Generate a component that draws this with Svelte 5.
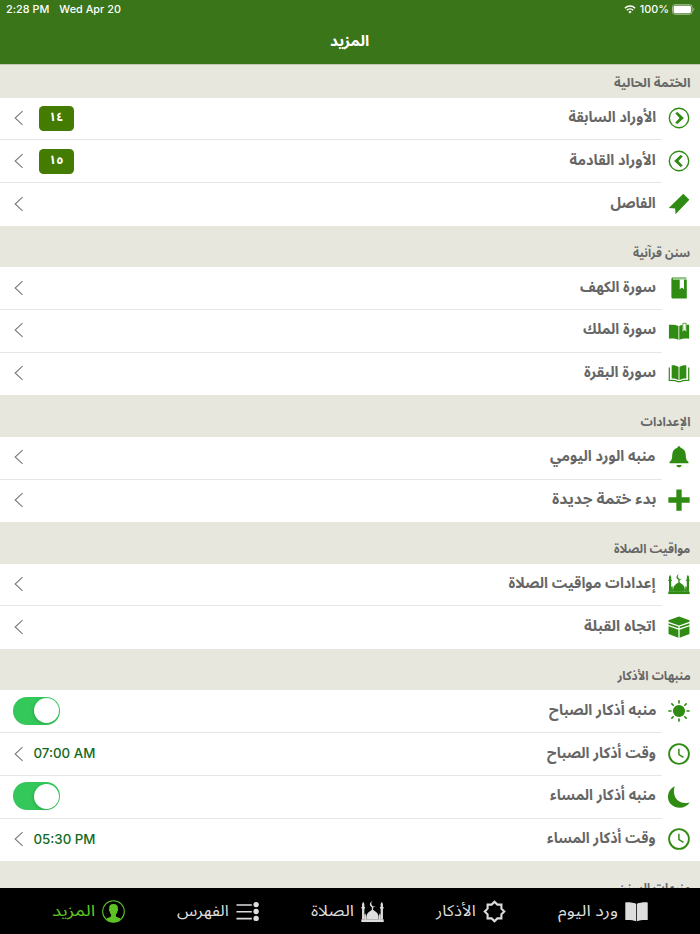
<script>
  const sections = [
    { title: 'الختمة الحالية', w: 76, first: true, rows: [
      { label: 'الأوراد السابقة', w: 87.5, icon: 'prev', badge: '١٤' },
      { label: 'الأوراد القادمة', w: 86.5, icon: 'next', badge: '١٥' },
      { label: 'الفاصل', w: 45.5, icon: 'bookmark' }
    ] },
    { title: 'سنن قرآنية', w: 57, rows: [
      { label: 'سورة الكهف', w: 76, icon: 'book' },
      { label: 'سورة الملك', w: 73, icon: 'bookOpen' },
      { label: 'سورة البقرة', w: 72, icon: 'bookWide' }
    ] },
    { title: 'الإعدادات', w: 50.5, rows: [
      { label: 'منبه الورد اليومي', w: 106, icon: 'bell' },
      { label: 'بدء ختمة جديدة', w: 104, icon: 'plus' }
    ] },
    { title: 'مواقيت الصلاة', w: 76, rows: [
      { label: 'إعدادات مواقيت الصلاة', w: 147.5, icon: 'mosque' },
      { label: 'اتجاه القبلة', w: 72, icon: 'kaaba' }
    ] },
    { title: 'منبهات الأذكار', w: 73.5, rows: [
      { label: 'منبه أذكار الصباح', w: 107, icon: 'sun', toggle: true },
      { label: 'وقت أذكار الصباح', w: 109, icon: 'clock', time: '07:00 AM' },
      { label: 'منبه أذكار المساء', w: 106, icon: 'moon', toggle: true },
      { label: 'وقت أذكار المساء', w: 109, icon: 'clock', time: '05:30 PM' }
    ] },
    { title: 'منبهات السنن', w: 73, rows: [] }
  ];

  const tabs = [
    { label: 'ورد اليوم', w: 60, icon: 'read' },
    { label: 'الأذكار', w: 40, icon: 'star' },
    { label: 'الصلاة', w: 43, icon: 'mosque' },
    { label: 'الفهرس', w: 52, icon: 'list' },
    { label: 'المزيد', w: 43, icon: 'person', active: true }
  ];

  // Condenses a line of text so that it fills the width of its box.
  function fit(node, width) {
    node.style.transform = `scaleX(${width / node.offsetWidth})`;
  }
</script>

{#snippet text(value, width)}
  <span class="fit" style="width:{width}px"><span class="fit-inner" use:fit={width}>{value}</span></span>
{/snippet}

{#snippet chevron()}
  <svg class="chevron" viewBox="0 0 10 16"><path d="M9 .8 1.2 8 9 15.2" fill="none" stroke="#777" stroke-width="1.1" /></svg>
{/snippet}

{#snippet icon(name)}
  <svg class="icon" viewBox="0 0 24 24" fill="currentColor">
    {#if name === 'prev' || name === 'next'}
      <circle cx="12" cy="12" r="10.6" fill="none" stroke="currentColor" stroke-width="1.5" />
      {#if name === 'prev'}
        <path d="M7.800 6.800 10.300 5.400 17.300 12l-7 6.600-2.500-1.400L12.600 12z" />
      {:else}
        <path d="M16.200 6.800 13.700 5.400 6.700 12l7 6.600 2.500-1.400L11.400 12z" />
      {/if}
    {:else if name === 'bookmark'}
      <path d="M16.700 .8 23.300 7.400 8.200 23.200 7.800 17 .8 16.300z" />
    {:else if name === 'book'}
      <path fill-rule="evenodd" d="M5.400.6H20v1H5.300v1.100h15.200v20.800H5.500c-1 0-1.800-.7-1.800-1.700V2.300c0-1 .7-1.700 1.700-1.700zM12.800 3v10.400l2.300-2 2.300 2V3z" />
    {:else if name === 'bookOpen'}
      <path d="M1 5.200c4-.4 7.800 0 10.400 1.300v15.100c-2.600-1.200-6.400-1.500-10.400-1.200zM12.300 6.500c1-.6 2.200-1 3.400-1.100v7.200l2.100-1.600 2.200 1.600V5.100h3v15.300c-4-.3-8 0-10.700 1.200z" />
      <path d="M16.200 11.300V3.600h3.600v7.700" fill="none" stroke="currentColor" stroke-width=".8" />
    {:else if name === 'bookWide'}
      <path d="M4 3.700c3-.2 5.500.3 7.500 1.800v14.400c-2-1.500-4.500-2-7.500-1.800zM20 3.700c-3-.2-5.500.3-7.500 1.800v14.400c2-1.500 4.500-2 7.500-1.800z" />
      <path d="M1.400 6v14.200c3.800-.4 7.300.2 9.400 1.300h2.400c2.100-1.100 5.600-1.700 9.400-1.300V6" fill="none" stroke="currentColor" stroke-width="1.300" />
    {:else if name === 'bell'}
      <path d="M12 .4c.9 0 1.600.6 1.700 1.600 3.500 1 5.600 4 5.700 7.800.1 4.400.8 6 2.900 7.500v1.500H1.700v-1.500c2.100-1.500 2.800-3.100 2.900-7.500.1-3.800 2.200-6.800 5.700-7.800.1-1 .8-1.600 1.700-1.600zM9.200 20.700h5.600c-.2 1.500-1.300 2.500-2.800 2.500s-2.600-1-2.800-2.500z" />
    {:else if name === 'plus'}
      <path d="M9.100.5h5.800v8.600h8.700v5.800h-8.700v8.700H9.100v-8.700H.4V9.100h8.700z" />
    {:else if name === 'mosque'}
      <path d="M.3 20.200h23.400v2.800H.3z" />
      <path d="M1.100 20.400V8.800H.4V7.300h.7V4.300L2.300 1.800l1.200 2.500v3h.7v1.500h-.7v11.600zM20.500 20.400V8.800h-.7V7.300h.7V4.300l1.200-2.500 1.200 2.500v3h.7v1.500h-.7v11.600z" />
      <path d="M5.900 20.400c-1.200-4.200.6-7.300 5.400-10V7.200h1.400v3.200c4.800 2.700 6.600 5.800 5.400 10z" />
      <path d="M12.300 1.300a3.200 3.200 0 1 0 2.800 5 2.600 2.600 0 1 1-2.800-5zM3.400 15.500l1.400-1.500.9 6.500H3.400zM20.600 15.500l-1.400-1.500-.9 6.500h2.300z" />
    {:else if name === 'kaaba'}
      <path d="M12 .6 23.400 4.600v1.800L12 10.400.6 6.400V4.600zM.6 7.800 11.300 11.500v1.900L.6 9.700zM23.400 7.800 12.700 11.500v1.900l10.700-3.700zM.6 11.200l10.700 3.700v8.700L.6 19.700zM23.400 11.200l-10.700 3.700v8.700l10.700-3.900z" />
    {:else if name === 'sun'}
      <circle cx="12" cy="12" r="6.600" />
      <path d="M12 1v2.200M12 20.800V23M1 12h2.200M20.800 12H23M4.200 4.200l1.500 1.500M18.300 18.300l1.500 1.500M4.200 19.800l1.500-1.500M18.300 5.700l1.500-1.500" stroke="currentColor" stroke-width="1.800" stroke-linecap="round" />
    {:else if name === 'clock'}
      <circle cx="12" cy="12" r="10.800" fill="none" stroke="currentColor" stroke-width="2" />
      <path d="M11.900 6.200v6.400l5 3.200" fill="none" stroke="currentColor" stroke-width="1.600" />
    {:else if name === 'moon'}
      <path d="M7.300.3C-1.300 4.500-2.100 15 3.600 20.200c6 5.600 16.400 4.200 20-2.200C11.500 21.200 3.800 11.700 7.300.3z" />
    {:else if name === 'read'}
      <path d="M.3 2.500c4.300-.3 8.200.2 11.300 1.500v18.300c-3.100-1.300-7-1.700-11.300-1.400zM23.700 2.500c-4.300-.3-8.200.2-11.300 1.500v18.300c3.100-1.300 7-1.700 11.300-1.400z" />
    {:else if name === 'star'}
      <path d="M12 1.800 15 4.800H19.200V9L22.200 12 19.200 15V19.200H15L12 22.200 9 19.200H4.800V15L1.800 12 4.800 9V4.800H9z" fill="none" stroke="currentColor" stroke-width="2.200" />
    {:else if name === 'list'}
      <path d="M.5 5.200h16M.5 12.300h16M.5 19.400h16" stroke="currentColor" stroke-width="1.700" />
      <circle cx="21" cy="4.800" r="2.800" /><circle cx="21" cy="12" r="2.800" /><circle cx="21" cy="19.200" r="2.800" />
    {:else if name === 'person'}
      <circle cx="12" cy="12" r="11.300" fill="none" stroke="currentColor" stroke-width="1.100" />
      <path d="M12 4.200c3.400 0 4.900 1.900 4.500 5.200.6.200.4 1.900-.4 2.400-.3 1.600-.9 2.600-1.600 3.200v2c.8 1.200 3.600 1.300 5.300 2.700-4.200 4.300-11.400 4.300-15.600 0 1.700-1.400 4.500-1.500 5.300-2.700v-2c-.7-.6-1.300-1.600-1.600-3.200-.8-.5-1-2.200-.4-2.400-.4-3.300 1.100-5.200 4.500-5.200z" />
    {/if}
  </svg>
{/snippet}

<div class="screen" dir="rtl">
  <header>
    <div class="status" dir="ltr">
      <span class="clock">2:28 PM</span><span>Wed Apr 20</span>
      <span class="spacer"></span>
      <svg class="wifi" viewBox="0 0 13 10"><g fill="none" stroke="#fff" stroke-width="1.600"><path d="M.8 3.500a8.200 8.200 0 0 1 11.400 0M2.900 5.800a5.200 5.200 0 0 1 7.200 0" /></g><path d="M6.500 9.500 4.600 7.500a2.800 2.800 0 0 1 3.800 0z" fill="#fff" /></svg>
      <span class="percent">100%</span>
      <svg class="battery" viewBox="0 0 24 11"><rect x=".5" y=".5" width="20.500" height="10" rx="2.700" fill="none" stroke="#a7c294" /><rect x="1.700" y="1.700" width="18.100" height="7.600" rx="1.500" fill="#fff" /><path d="M22.300 3.800c1.300.5 1.300 2.900 0 3.400z" fill="#a7c294" /></svg>
    </div>
    <h1>{@render text('المزيد', 39)}</h1>
  </header>

  <main>
    {#each sections as section}
      <h2 class:first={section.first}>{@render text(section.title, section.w)}</h2>
      {#each section.rows as row, i}
        <div class="row">
          <div class="lead">{@render icon(row.icon)}</div>
          <div class="body" class:line={i < section.rows.length - 1}>
            <div class="label">{@render text(row.label, row.w)}</div>
            {#if row.toggle}
              <span class="toggle"><span class="knob"></span></span>
            {:else}
              {#if row.badge}<span class="badge">{row.badge}</span>{/if}
              {#if row.time}<span class="time" dir="ltr">{row.time}</span>{/if}
              {@render chevron()}
            {/if}
          </div>
        </div>
      {/each}
    {/each}
  </main>

  <nav>
    {#each tabs as tab}
      <div class="tab" class:active={tab.active}>
        {@render icon(tab.icon)}
        <span class="tab-label">{@render text(tab.label, tab.w)}</span>
      </div>
    {/each}
  </nav>
</div>

<style>
  :global(body) { background: #e7e7de; }
  .screen {
    width: 700px; height: 934px; overflow: hidden; display: flex; flex-direction: column;
    background: #e7e7de; font-family: "Noto Sans Arabic", "DejaVu Sans", sans-serif; color: #666;
  }
  header { height: 64.500px; flex: none; background: #3b751a; color: #fff; border-bottom: 1px solid #c3c9b5; box-sizing: border-box; }
  .status { height: 18px; display: flex; align-items: center; padding: 0 5px 0 6px; font: 500 10.800px Inter, sans-serif; letter-spacing: .04px; }
  .clock { margin-right: 10px; }
  .spacer { flex: 1; }
  .wifi { width: 12px; height: 9px; margin-right: 4px; }
  .percent { margin-right: 3px; }
  .battery { width: 23px; height: 11px; }
  h1 { margin: 0; height: 45px; display: flex; justify-content: center; align-items: center; font-size: 15px; font-weight: 700; }
  h2 { margin: 0; height: 41.300px; box-sizing: border-box; padding: 12px 9.500px 0 0; display: flex; align-items: center; font-size: 12.500px; font-weight: 700; }
  h2.first { height: 33.200px; padding-top: 4px; }
  .fit { display: inline-block; white-space: nowrap; }
  .fit-inner { display: inline-block; transform-origin: right center; }
  main { flex: 1; min-height: 0; overflow: hidden; }
  .row { height: 42.750px; display: flex; background: #fff; }
  .lead { width: 38px; flex: none; display: flex; align-items: center; justify-content: center; padding: 0 5px 1.500px 0; box-sizing: border-box; color: #2f8b12; }
  .icon { width: 22px; height: 22px; flex: none; display: block; }
  .body { flex: 1; display: flex; align-items: center; box-sizing: border-box; padding: 0 6px 1px 13px; }
  .body.line { padding-bottom: 0; }
  .line { border-bottom: 1px solid #e6e6e6; }
  .label { flex: 1; font-size: 15px; font-weight: 700; margin-top: -3px; }
  .chevron { width: 9.500px; height: 16px; margin: 0 0 1px 1px; }
  .badge { width: 35.500px; height: 25px; border-radius: 4.500px; background: #447c03; color: #fff; font-size: 12.500px; font-weight: 700; line-height: 23px; text-align: center; margin: 0 0 0 15px; }
  .time { font: 500 13.300px Inter, sans-serif; color: #0f6a22; margin: 0 0 2px 10px; }
  .toggle { width: 47px; height: 28px; border-radius: 14px; background: #34c759; display: flex; align-items: center; box-sizing: border-box; padding: 0 1.500px; margin-bottom: 1px; }
  .knob { width: 25px; height: 25px; border-radius: 50%; background: #fff; box-shadow: -1px 1px 3px rgba(0, 0, 0, .15); }
  nav { height: 46px; flex: none; background: #000; color: #ddd; display: flex; justify-content: space-between; align-items: center; padding: 0 52px; box-sizing: border-box; }
  .tab { display: flex; align-items: center; gap: 7px; }
  .tab .icon { width: 23px; height: 23px; }
  .tab-label { font-size: 15.500px; }
  .active { color: #5ec425; }
</style>
